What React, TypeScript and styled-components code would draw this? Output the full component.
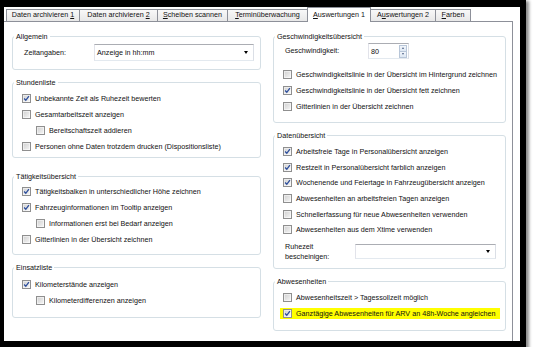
import React from "react";
import styled, { createGlobalStyle } from "styled-components";

const Global = createGlobalStyle`
  html, body { margin: 0; padding: 0; background: #fff; }
  body {
    font-family: "Liberation Sans", Arial, sans-serif;
    font-size: 7.2px;
    color: #111;
  }
`;

const Frame = styled.div`
  box-sizing: border-box;
  width: 526px;
  height: 347px;
  border-style: solid;
  border-color: #000;
  border-width: 7px 6px 6px 4px;
  box-shadow: 2px 2px 3px 1px rgba(0, 0, 0, 0.45);
  background: #fff;
  display: flex;
  flex-direction: column;
  overflow: hidden;
`;

const TabStrip = styled.nav`
  position: relative;
  z-index: 2;
  display: flex;
  align-items: flex-end;
  height: 14px;
  padding-left: 2px;
`;

const Tab = styled.div<{ $w: number; $active?: boolean }>`
  box-sizing: border-box;
  width: ${(p) => p.$w}px;
  height: ${(p) => (p.$active ? 15 : 12)}px;
  margin-right: -1px;
  margin-bottom: ${(p) => (p.$active ? -1 : 0)}px;
  border: 1px solid #8d9099;
  border-bottom: none;
  background: ${(p) => (p.$active ? "#fff" : "linear-gradient(#f8f8f8, #e8e8e8)")};
  position: relative;
  z-index: ${(p) => (p.$active ? 1 : 0)};
  text-align: center;
  line-height: ${(p) => (p.$active ? 14 : 10)}px;
  white-space: nowrap;
`;

const Page = styled.main`
  flex: 1;
  margin-right: 7px;
  border-top: 1px solid #8d9099;
  border-right: 1px solid #8d9099;
  padding: 14px 6px 0 8px;
  display: grid;
  grid-template-columns: 249px 233px;
  column-gap: 12px;
  align-items: start;
  background: #fff;
`;

const Column = styled.div`
  display: flex;
  flex-direction: column;
`;

const Group = styled.section<{ $mt: number; $pb: number }>`
  margin-top: ${(p) => p.$mt}px;
  border: 1px solid #d5dfe5;
  border-radius: 3px;
  padding: 0 6px ${(p) => p.$pb}px 9px;
  display: flex;
  flex-direction: column;
`;

const GroupTitle = styled.div`
  align-self: flex-start;
  margin: -5px 0 0 -8px;
  padding: 0 2px;
  height: 9px;
  line-height: 9px;
  background: #fff;
  white-space: nowrap;
`;

const Rows = styled.div<{ $mt: number }>`
  margin-top: ${(p) => p.$mt}px;
  display: flex;
  flex-direction: column;
`;

const CheckRow = styled.div<{ $indent?: boolean; $h: number }>`
  display: flex;
  align-items: center;
  gap: 4px;
  height: ${(p) => p.$h}px;
  padding-left: ${(p) => (p.$indent ? 14 : 0)}px;
  white-space: nowrap;
`;

const Highlight = styled.span`
  display: flex;
  align-items: center;
  gap: 4px;
  height: 11px;
  margin-left: -3px;
  padding: 0 4px 0 3px;
  background: #ffff00;
`;

const Box = styled.span`
  box-sizing: border-box;
  flex: none;
  width: 9px;
  height: 9px;
  border: 1px solid #8f8f8f;
  background: linear-gradient(135deg, #cfcfcf, #f6f6f6);
  box-shadow: inset 0 0 0 1px rgba(255, 255, 255, 0.5);
  display: flex;
  align-items: center;
  justify-content: center;
`;

const FieldRow = styled.div<{ $h: number; $mt: number }>`
  display: flex;
  align-items: center;
  height: ${(p) => p.$h}px;
  margin-top: ${(p) => p.$mt}px;
`;

const FieldLabel = styled.div<{ $w: number }>`
  width: ${(p) => p.$w}px;
  padding-left: 2px;
  box-sizing: border-box;
  line-height: 10px;
`;

const Combo = styled.div<{ $w: number; $h: number }>`
  box-sizing: border-box;
  width: ${(p) => p.$w}px;
  height: ${(p) => p.$h}px;
  border: 1px solid;
  border-color: #abadb3 #dbdfe6 #e3e9ef #e2e3ea;
  background: #fff;
  display: flex;
  align-items: center;
  justify-content: space-between;
  padding: 0 5px 0 2px;
`;

const Arrow = styled.span`
  width: 0;
  height: 0;
  border-left: 2.5px solid transparent;
  border-right: 2.5px solid transparent;
  border-top: 3px solid #000;
`;

const Spin = styled.div`
  box-sizing: border-box;
  width: 41px;
  height: 16px;
  border: 1px solid;
  border-color: #abadb3 #dbdfe6 #e3e9ef #e2e3ea;
  display: flex;
  align-items: center;
  justify-content: space-between;
  padding: 0 1px 0 2px;
  background: #fff;
`;

const SpinButtons = styled.div`
  display: flex;
  flex-direction: column;
  width: 8px;
  height: 13px;
`;

const SpinBtn = styled.span`
  flex: 1;
  border: 1px solid #b8c6d8;
  background: linear-gradient(#f2f6fb, #dde7f3);
  display: flex;
  align-items: center;
  justify-content: center;
  & + & { border-top: none; }
`;

const Tri = styled.span<{ $up?: boolean }>`
  width: 0;
  height: 0;
  border-left: 1.5px solid transparent;
  border-right: 1.5px solid transparent;
  ${(p) => (p.$up ? "border-bottom: 2px solid #4d6185;" : "border-top: 2px solid #4d6185;")}
`;

type CB = { text: string; checked?: boolean; indent?: boolean; hl?: boolean };

const Check = ({ checked }: { checked?: boolean }) => (
  <Box>
    {checked && (
      <svg width="7" height="7" viewBox="0 0 7 7">
        <path d="M1.1 3.5 L2.8 5.3 L5.9 1.1" fill="none" stroke="#2d4e9c" strokeWidth="1.3" />
      </svg>
    )}
  </Box>
);

const CheckList = ({ items, h = 16, mt }: { items: CB[]; h?: number; mt: number }) => (
  <Rows $mt={mt}>
    {items.map((it) => (
      <CheckRow key={it.text} $indent={it.indent} $h={h}>
        {it.hl ? (
          <Highlight>
            <Check checked={it.checked} />
            <span>{it.text}</span>
          </Highlight>
        ) : (
          <>
            <Check checked={it.checked} />
            <span>{it.text}</span>
          </>
        )}
      </CheckRow>
    ))}
  </Rows>
);

const tabs: { label: React.ReactNode; w: number; active?: boolean }[] = [
  { label: <>Daten archivieren <u>1</u></>, w: 74 },
  { label: <>Daten archivieren <u>2</u></>, w: 79 },
  { label: <><u>S</u>cheiben scannen</>, w: 71 },
  { label: <><u>T</u>erminüberwachung</>, w: 81 },
  { label: <><u>A</u>uswertungen 1</>, w: 64, active: true },
  { label: <>A<u>u</u>swertungen 2</>, w: 66 },
  { label: <><u>F</u>arben</>, w: 36 },
];

export default function App() {
  return (
    <>
      <Global />
      <Frame>
        <TabStrip>
          {tabs.map((t, i) => (
            <Tab key={i} $w={t.w} $active={t.active}>
              {t.label}
            </Tab>
          ))}
        </TabStrip>
        <Page>
          <Column>
            <Group $mt={0} $pb={8}>
              <GroupTitle>Allgemein</GroupTitle>
              <FieldRow $h={17} $mt={3}>
                <FieldLabel $w={72}>Zeitangaben:</FieldLabel>
                <Combo $w={160} $h={17}>
                  <span>Anzeige in hh:mm</span>
                  <Arrow />
                </Combo>
              </FieldRow>
            </Group>
            <Group $mt={12} $pb={3}>
              <GroupTitle>Stundenliste</GroupTitle>
              <CheckList
                mt={3}
                items={[
                  { text: "Unbekannte Zeit als Ruhezeit bewerten", checked: true },
                  { text: "Gesamtarbeitszeit anzeigen" },
                  { text: "Bereitschaftszeit addieren", indent: true },
                  { text: "Personen ohne Daten trotzdem drucken (Dispositionsliste)" },
                ]}
              />
            </Group>
            <Group $mt={18} $pb={7}>
              <GroupTitle>Tätigkeitsübersicht</GroupTitle>
              <CheckList
                mt={2}
                items={[
                  { text: "Tätigkeitsbalken in unterschiedlicher Höhe zeichnen", checked: true },
                  { text: "Fahrzeuginformationen im Tooltip anzeigen", checked: true },
                  { text: "Informationen erst bei Bedarf anzeigen", indent: true },
                  { text: "Gitterlinien in der Übersicht zeichnen" },
                ]}
              />
            </Group>
            <Group $mt={12} $pb={9}>
              <GroupTitle>Einsatzliste</GroupTitle>
              <CheckList
                mt={4}
                items={[
                  { text: "Kilometerstände anzeigen", checked: true },
                  { text: "Kilometerdifferenzen anzeigen", indent: true },
                ]}
              />
            </Group>
          </Column>
          <Column>
            <Group $mt={0} $pb={8}>
              <GroupTitle>Geschwindigkeitsübersicht</GroupTitle>
              <FieldRow $h={16} $mt={2}>
                <FieldLabel $w={85}>Geschwindigkeit:</FieldLabel>
                <Spin>
                  <span>80</span>
                  <SpinButtons>
                    <SpinBtn>
                      <Tri $up />
                    </SpinBtn>
                    <SpinBtn>
                      <Tri />
                    </SpinBtn>
                  </SpinButtons>
                </Spin>
              </FieldRow>
              <CheckList
                mt={7}
                items={[
                  { text: "Geschwindigkeitslinie in der Übersicht im Hintergrund zeichnen" },
                  { text: "Geschwindigkeitslinie in der Übersicht fett zeichnen", checked: true },
                  { text: "Gitterlinien in der Übersicht zeichnen" },
                ]}
              />
            </Group>
            <Group $mt={12} $pb={6}>
              <GroupTitle>Datenübersicht</GroupTitle>
              <CheckList
                mt={4}
                h={15.6}
                items={[
                  { text: "Arbeitsfreie Tage in Personalübersicht anzeigen", checked: true },
                  { text: "Restzeit in Personalübersicht farblich anzeigen", checked: true },
                  { text: "Wochenende und Feiertage in Fahrzeugübersicht anzeigen", checked: true },
                  { text: "Abwesenheiten an arbeitsfreien Tagen anzeigen" },
                  { text: "Schnellerfassung für neue Abwesenheiten verwenden" },
                  { text: "Abwesenheiten aus dem Xtime verwenden" },
                ]}
              />
              <FieldRow $h={20} $mt={4}>
                <FieldLabel $w={72}>
                  Ruhezeit
                  <br />
                  bescheinigen:
                </FieldLabel>
                <Combo $w={141} $h={15}>
                  <span />
                  <Arrow />
                </Combo>
              </FieldRow>
            </Group>
            <Group $mt={12} $pb={8}>
              <GroupTitle>Abwesenheiten</GroupTitle>
              <CheckList
                mt={4}
                items={[
                  { text: "Abwesenheitszeit > Tagessollzeit möglich" },
                  {
                    text: "Ganztägige Abwesenheiten für ARV an 48h-Woche angleichen",
                    checked: true,
                    hl: true,
                  },
                ]}
              />
            </Group>
          </Column>
        </Page>
      </Frame>
    </>
  );
}
